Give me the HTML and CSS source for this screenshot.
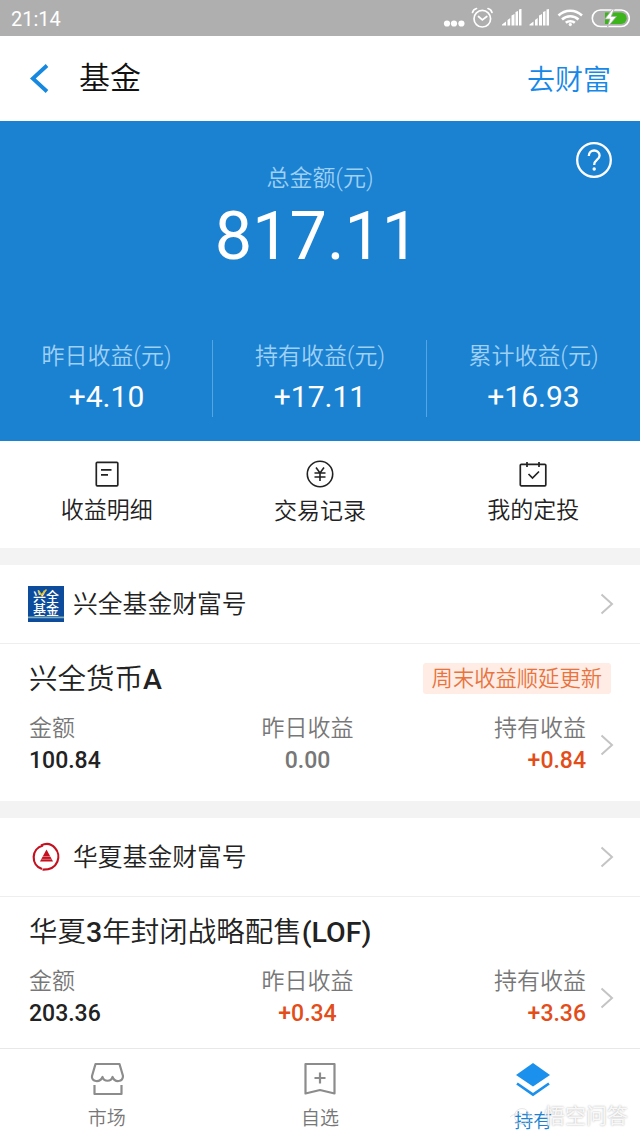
FILE: index.html
```html
<!DOCTYPE html>
<html lang="zh-CN">
<head>
<meta charset="utf-8">
<title>基金</title>
<link rel="stylesheet" href="styles.css">
</head>
<body>
<div class="status">
  <span class="clock">21:14</span>
  <svg class="status-icons" width="190" height="36" viewBox="0 0 190 36" fill="none" stroke="#fff">
    <g fill="#fff" stroke="none"><circle cx="7" cy="23.5" r="3.100"/><circle cx="14" cy="23.5" r="3.100"/><circle cx="21.400" cy="23.500" r="3.100"/></g>
    <g stroke-width="1.7" stroke-linecap="round"><circle cx="42.300" cy="18.700" r="8.300"/><path d="M38.500 16.500l3.800 3.500 4.500-3.500M32.500 12.500c.5-2 2-3.500 4-4M52 12.500c-.5-2-2-3.500-4-4"/></g>
    <g fill="#fff" stroke="none"><path d="M62 25.500v-1l4-3v4zM67.500 20l2.700-2v7.500h-2.700zM71.500 15.500l3-1.500v11.500h-3zM75.500 12l2.500-1v14.500h-2.500zM79 9.500l1.500-.5h1v16.500H79z"/><path d="M89.500 25.500v-1l4-3v4zM95 20l2.700-2v7.500H95zM99 15.500l3-1.500v11.500h-3zM103 12l2.500-1v14.500H103zM106.500 9.500l2.500-.5v16.500h-2.500z"/></g>
    <g stroke-width="2.500"><path d="M118.500 15.500c6.500-6.500 17-6.500 23.500 0M122 19.500c4.500-4.500 12-4.500 16.500 0M125.800 22.800c2.500-2.200 6.500-2.200 9 0"/><circle cx="130.300" cy="24.500" r="1.200" fill="#fff" stroke-width="1"/></g>
    <rect x="152.300" y="10" width="37" height="16.500" rx="8.200" stroke-width="1.600"/>
    <path d="M165 12.500h16a5.700 5.700 0 0 1 0 11.400h-16z" fill="#3cb41c" stroke="none"/>
    <path d="M172.500 9l-7.500 10h5l-2.500 8 9-10.500h-5.300l3-7.500z" fill="#fff" stroke="#afafaf" stroke-width=".8"/>
  </svg>
</div>
<header class="nav">
  <svg class="back" width="20" height="30" viewBox="0 0 20 30" fill="none" stroke="#1688e0" stroke-width="3.800"><path d="M18 1.500L3.800 14.500 18 27.500"/></svg>
  <h1 class="nav-title">基金</h1>
  <span class="nav-link">去财富</span>
</header>
<section class="hero">
  <svg class="help" width="38" height="38" viewBox="0 0 38 38" fill="none" stroke="#fff" stroke-width="2.300"><circle cx="19" cy="19" r="16.800"/><path d="M13.800 15c0-7.500 10.800-7 10.800-.5 0 4.500-5.400 4-5.400 9.500"/><circle cx="19.200" cy="28" r="1.700" fill="#fff" stroke="none"/></svg>
  <div class="hero-label">总金额(元)</div>
  <div class="hero-total">817.11</div>
  <div class="stats">
    <div class="stat"><span class="stat-label">昨日收益(元)</span><span class="stat-value">+4.10</span></div>
    <div class="stat"><span class="stat-label">持有收益(元)</span><span class="stat-value">+17.11</span></div>
    <div class="stat"><span class="stat-label">累计收益(元)</span><span class="stat-value">+16.93</span></div>
  </div>
</section>
<section class="actions">
  <div class="action">
    <svg width="30" height="32" viewBox="0 0 30 32" fill="none" stroke="#222" stroke-width="1.700"><rect x="4.300" y="4.300" width="21.500" height="23.500" rx="1"/><path d="M9 11.800h10.500M9 16.800h7"/></svg>
    <span>收益明细</span>
  </div>
  <div class="action action-mid">
    <svg width="30" height="32" viewBox="0 0 30 32" fill="none" stroke="#222" stroke-width="1.600"><circle cx="15" cy="16" r="12.700"/><path d="M11 9.500l4 5.500 4-5.500M9.500 15h11M9.500 19h11M15 15v8"/></svg>
    <span>交易记录</span>
  </div>
  <div class="action">
    <svg width="30" height="32" viewBox="0 0 30 32" fill="none" stroke="#222" stroke-width="1.700"><rect x="2.300" y="6.300" width="25.500" height="21.500" rx="1"/><path d="M9 4v5M21 4v5M10.500 16l4 4 6.500-6.500"/></svg>
    <span>我的定投</span>
  </div>
</section>
<section class="card">
  <div class="company">
    <svg class="logo" width="36" height="36" viewBox="0 0 36 36"><path fill="#0d4c9c" d="M0 0h36v36H0z"/><path fill="#82aeb8" d="M0 30.500h36v1.800H0z"/><text class="logo-text" x="5" y="15.300">兴全</text><text class="logo-text" x="5" y="27.900">基金</text><path d="M10.500 5l3 4 5-5.500" fill="none" stroke="#e6c51d" stroke-width="1.500"/></svg>
    <span>兴全基金财富号</span>
    <svg class="chevron" width="14" height="22" viewBox="0 0 14 22"><path d="M1.500 1.500L12 11 1.500 20.500"/></svg>
  </div>
  <div class="fund">
    <div class="fund-head"><h2>兴全货币<b>A</b></h2><span class="tag">周末收益顺延更新</span></div>
    <div class="metrics">
      <div class="metric"><span class="label">金额</span><span class="value">100.84</span></div>
      <div class="metric mid"><span class="label">昨日收益</span><span class="value flat">0.00</span></div>
      <div class="metric end"><span class="label">持有收益</span><span class="value up">+0.84</span></div>
      <svg class="chevron" width="14" height="22" viewBox="0 0 14 22"><path d="M1.500 1.500L12 11 1.500 20.500"/></svg>
    </div>
  </div>
</section>
<section class="card last">
  <div class="company">
    <svg class="logo" width="36" height="36" viewBox="0 0 36 36" fill="none" stroke="#c4101f"><path d="M15 6.500C3 9.500 2.500 26 14 30M13 6.500c6-3 11-1 14 2.500M27 9c6.500 7 4 22-12.500 21.700" stroke-width="2.200"/><path d="M18.500 10.500L12 22.500h13z" fill="#c4101f" stroke="none"/><path d="M14.500 17.500h8M13.500 20.300h10" stroke="#fff" stroke-width=".4"/></svg>
    <span>华夏基金财富号</span>
    <svg class="chevron" width="14" height="22" viewBox="0 0 14 22"><path d="M1.500 1.500L12 11 1.500 20.500"/></svg>
  </div>
  <div class="fund">
    <div class="fund-head"><h2>华夏<b>3</b>年封闭战略配售<b>(LOF)</b></h2></div>
    <div class="metrics">
      <div class="metric"><span class="label">金额</span><span class="value">203.36</span></div>
      <div class="metric mid"><span class="label">昨日收益</span><span class="value up">+0.34</span></div>
      <div class="metric end"><span class="label">持有收益</span><span class="value up">+3.36</span></div>
      <svg class="chevron" width="14" height="22" viewBox="0 0 14 22"><path d="M1.500 1.500L12 11 1.500 20.500"/></svg>
    </div>
  </div>
</section>
<nav class="tabs">
  <div class="tab">
    <svg width="36" height="36" viewBox="0 0 36 36" fill="none" stroke="#8c8c8c" stroke-width="2.200"><path d="M6.500 3h24l3.500 12c0 6-8 7-10.500 1-1.500 5-8.500 5-10 0-2.500 6-11.500 5-10.500-1zM5.500 24v9h27V24" stroke-linejoin="round"/></svg>
    <span>市场</span>
  </div>
  <div class="tab">
    <svg width="36" height="36" viewBox="0 0 36 36" fill="none" stroke="#8c8c8c" stroke-width="2.200"><path d="M3.500 3h29v29.500L18 29 3.500 32.500zM18 11.500v11M12.500 17h11" stroke-linejoin="round"/></svg>
    <span>自选</span>
  </div>
  <div class="tab active">
    <svg width="36" height="36" viewBox="0 0 36 36" fill="none"><path fill="#1b90ec" d="M18 2l17 12-17 11.500L1 14z"/><path d="M2 22.500l16 11 16-11" stroke="#1b90ec" stroke-width="2.700"/></svg>
    <span>持有</span>
  </div>
  <div class="watermark">
    <svg width="32" height="22" viewBox="0 0 32 22" fill="none" stroke="#d4d4d4" stroke-opacity=".55"><circle cx="14" cy="11" r="7.500"/><path d="M2 12c4-5 20-5 26 1M7 17c5 3 12 3 17-1"/></svg>
    <span>悟空问答</span>
  </div>
</nav>
</body>
</html>
```
FILE: styles.css
```css
* { box-sizing: border-box; }
body {
  margin: 0;
  width: 640px;
  height: 1138px;
  overflow: hidden;
  display: flex;
  flex-direction: column;
  background: #f3f3f3;
  color: #222;
  font-family: Roboto, "Noto Sans CJK SC", sans-serif;
  font-weight: 350;
}
svg { display: block; flex: none; }
h1, h2 { margin: 0; }
.status {
  height: 36px;
  flex: none;
  display: flex;
  justify-content: space-between;
  align-items: center;
  padding: 0 10px 0 11px;
  background: #afafaf;
  color: #fff;
}
.clock { font-size: 20px; font-weight: 400; line-height: 36px; padding-top: 2px; }
.nav {
  height: 85px;
  flex: none;
  display: flex;
  align-items: center;
  padding: 0 29px;
  background: #fff;
}
.nav-title { margin-left: 30px; font-size: 31px; font-weight: 350; line-height: 40px; color: #111; }
.nav-link { margin-left: auto; font-size: 28px; line-height: 40px; color: #1688e8; padding-top: 4px; }
.hero {
  height: 320px;
  flex: none;
  position: relative;
  padding-top: 42px;
  background: #1b82d2;
  color: #fff;
  text-align: center;
}
.help { position: absolute; right: 27px; top: 20px; }
.hero-label { font-size: 23px; line-height: 32px; color: #9fd0f5; }
.hero-total { font-size: 66.500px; font-weight: 400; line-height: 82px; padding-right: 6px; }
.stats { display: grid; grid-template-columns: 213px 214px 213px; margin-top: 63px; height: 76px; }
.stat { display: flex; flex-direction: column; align-items: center; }
.stat + .stat { border-left: 1px solid #55a5e2; margin-left: -1px; }
.stat-label { font-size: 23px; line-height: 32px; color: #9fd0f5; padding-top: 1px; }
.stat-value { font-size: 30px; font-weight: 400; line-height: 40px; margin-top: 4px; }
.actions {
  height: 107px;
  flex: none;
  display: grid;
  grid-template-columns: repeat(3, 1fr);
  padding-top: 17px;
  background: #fff;
}
.action { display: flex; flex-direction: column; align-items: center; gap: 5px; font-size: 23px; line-height: 32px; }
.action-mid { gap: 6px; }
.card { height: 236px; flex: none; margin-top: 17px; background: #fff; }
.last { height: 230px; }
.company {
  height: 79px;
  display: flex;
  align-items: center;
  padding: 0 26px 0 28px;
  border-bottom: 1px solid #eee;
  font-size: 24.800px;
  line-height: 36px;
}
.company span { padding-top: 2px; }
.logo { margin-right: 9px; }
.logo-text { font-size: 13px; font-weight: 500; fill: #fff; font-family: "Noto Sans CJK SC", sans-serif; }
.company .chevron { margin-left: auto; }
.chevron { fill: none; stroke: #c4c4c4; stroke-width: 2; }
.fund { padding: 16px 29px 0; }
.fund-head { height: 40px; display: flex; align-items: center; justify-content: space-between; }
.fund-head h2 { font-size: 28.500px; font-weight: 350; line-height: 40px; }
.fund-head b { font-weight: 500; }
.tag {
  padding: 0 9px;
  border-radius: 3px;
  background: #feece5;
  color: #e8733d;
  font-size: 21.300px;
  line-height: 31px;
  margin-top: -3px;
}
.metrics { display: grid; grid-template-columns: 1fr 1fr 1fr 25px; margin-top: 13px; }
.metric { display: flex; flex-direction: column; }
.mid { align-items: center; }
.end { align-items: flex-end; }
.label { font-size: 23px; line-height: 32px; color: #777; }
.value { font-size: 23px; font-weight: 500; line-height: 32px; }
.flat { color: #777; }
.up { color: #e24d19; }
.metrics .chevron { align-self: center; justify-self: end; margin-right: -3px; }
.tabs {
  flex: 1;
  position: relative;
  display: grid;
  grid-template-columns: repeat(3, 1fr);
  border-top: 1px solid #e8e8e8;
  background: #fff;
  padding-top: 12px;
}
.tab { display: flex; flex-direction: column; align-items: center; gap: 8px; font-size: 19px; line-height: 28px; color: #777; }
.active { color: #1b82d2; }
.active span { padding-top: 3px; }
.watermark {
  position: absolute;
  left: 508px;
  bottom: 7px;
  display: flex;
  align-items: center;
  gap: 4px;
  font-size: 21px;
  line-height: 30px;
  font-weight: 400;
  color: rgba(255, 255, 255, 0.9);
  text-shadow: 0 0 2px #aaa;
}
```
